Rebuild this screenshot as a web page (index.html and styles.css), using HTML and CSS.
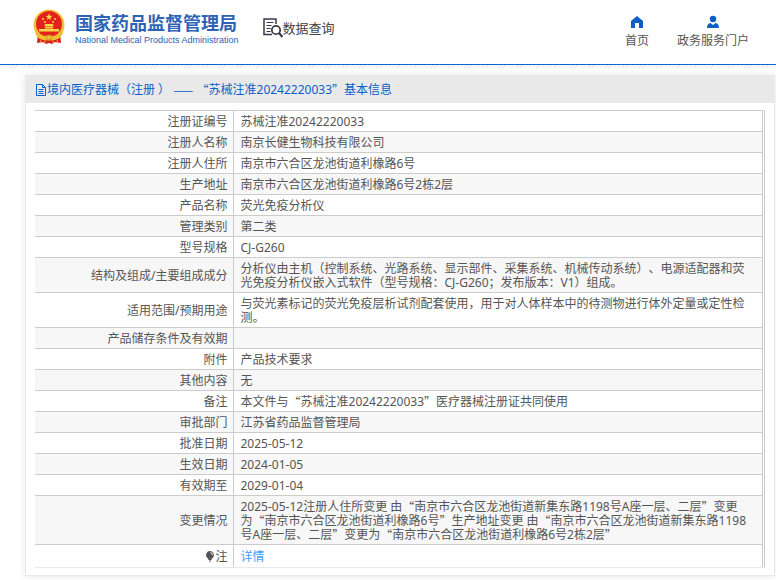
FILE: index.html
```html
<!DOCTYPE html>
<html lang="zh-CN">
<head>
<meta charset="utf-8">
<title>国家药品监督管理局 数据查询</title>
<link rel="stylesheet" href="styles.css">
</head>
<body>
<header class="top">
  <a class="brand" href="#">
    <svg class="emblem" viewBox="0 0 32 36" aria-hidden="true">
      <path d="M5 24L4 34L10 33L13 35L16 34L19 35L22 33L28 34L27 24Z" fill="#d8201a"/>
      <circle cx="16" cy="16" r="15.500" fill="#f3c33c"/>
      <circle cx="16" cy="15" r="13" fill="#e3231b"/>
      <path d="M16 4.500l.9 2.300 2.500.1-2 1.500.7 2.400-2.100-1.400-2.100 1.400.7-2.400-2-1.500 2.500-.1z" fill="#f9d849"/>
      <g fill="#f9d849"><circle cx="10" cy="10" r="1"/><circle cx="12" cy="13" r="1"/><circle cx="20" cy="13" r="1"/><circle cx="22" cy="10" r="1"/>
      <path d="M11 17l1.500-2h7l1.500 2zM12 17.500h8v2h-8zM6 20h20v2.500H6z"/></g>
      <path d="M2 21Q7 27 12 27Q16 25 20 27Q25 27 30 21Q30 29 22 31L16 29L10 31Q2 29 2 21Z" fill="#f0bd33"/>
      <circle cx="16" cy="28.500" r="2.500" fill="#f3c33c" stroke="#c98a1b"/>
      <path d="M8 31l-1 3M12 31v3M20 31v3M24 31l1 3" stroke="#f3a33c"/>
    </svg>
    <span class="names"><span class="name">国家药品监督管理局</span><span class="name-en">National Medical Products Administration</span></span>
  </a>
  <a class="query" href="#">
    <svg class="query-icon" viewBox="0 0 20 20" fill="none" stroke="#37374a" aria-hidden="true">
      <path d="M9 16.500H1V1H13V6" stroke-width="1.500"/>
      <path d="M3.500 4.500h7M3.500 7.500h5M3.500 10.500h4M3.500 13.500h4"/>
      <circle cx="13" cy="12" r="4.200" stroke-width="1.700"/>
      <path d="M16 15l3.500 4" stroke-width="2.200"/>
    </svg>
    <span>数据查询</span>
  </a>
  <nav class="nav">
    <a href="#"><svg viewBox="0 0 14 14" aria-hidden="true"><path d="M7 1L13 6V13H9V8H5V13H1V6Z"/></svg>首页</a>
    <a href="#"><svg viewBox="0 0 14 14" aria-hidden="true"><circle cx="7" cy="4" r="3.200"/><path d="M1 13Q1 8.500 4.500 8L7 10L9.500 8Q13 8.500 13 13Z"/></svg>政务服务门户</a>
  </nav>
</header>
<main class="card">
  <h1 class="title"><svg viewBox="0 0 11 12" fill="none" stroke="#0b5fc7" aria-hidden="true"><path d="M.5 .5H6.500L9.500 3.500V11.500H.5ZM6.500 .5V3.500H9.500M2.500 5.500H7.500M2.500 7.500H7.500M2.500 9.500H7.500"/></svg>境内医疗器械（注册 ） <span class="cjk">——</span> <span class="cjk">“</span>苏械注准20242220033<span class="cjk">”</span>基本信息</h1>
  <div class="frame">
  <table class="info">
    <tr><th scope="row">注册证编号</th><td>苏械注准20242220033</td></tr>
    <tr><th scope="row">注册人名称</th><td>南京长健生物科技有限公司</td></tr>
    <tr><th scope="row">注册人住所</th><td>南京市六合区龙池街道利橡路6号</td></tr>
    <tr><th scope="row">生产地址</th><td>南京市六合区龙池街道利橡路6号2栋2层</td></tr>
    <tr><th scope="row">产品名称</th><td>荧光免疫分析仪</td></tr>
    <tr><th scope="row">管理类别</th><td>第二类</td></tr>
    <tr><th scope="row">型号规格</th><td>CJ-G260</td></tr>
    <tr><th scope="row">结构及组成/主要组成成分</th><td>分析仪由主机（控制系统、光路系统、显示部件、采集系统、机械传动系统）、电源适配器和荧光免疫分析仪嵌入式软件（型号规格：CJ-G260；发布版本：V1）组成。</td></tr>
    <tr><th scope="row">适用范围/预期用途</th><td>与荧光素标记的荧光免疫层析试剂配套使用，用于对人体样本中的待测物进行体外定量或定性检测。</td></tr>
    <tr><th scope="row">产品储存条件及有效期</th><td></td></tr>
    <tr><th scope="row">附件</th><td>产品技术要求</td></tr>
    <tr><th scope="row">其他内容</th><td>无</td></tr>
    <tr><th scope="row">备注</th><td>本文件与<span class="cjk">“</span>苏械注准20242220033<span class="cjk">”</span>医疗器械注册证共同使用</td></tr>
    <tr><th scope="row">审批部门</th><td>江苏省药品监督管理局</td></tr>
    <tr><th scope="row">批准日期</th><td>2025-05-12</td></tr>
    <tr><th scope="row">生效日期</th><td>2024-01-05</td></tr>
    <tr><th scope="row">有效期至</th><td>2029-01-04</td></tr>
    <tr><th scope="row">变更情况</th><td>2025-05-12注册人住所变更 由<span class="cjk">“</span>南京市六合区龙池街道新集东路1198号A座一层、二层<span class="cjk">”</span>变更为<span class="cjk">“</span>南京市六合区龙池街道利橡路6号<span class="cjk">”</span>生产地址变更 由<span class="cjk">“</span>南京市六合区龙池街道新集东路1198号A座一层、二层<span class="cjk">”</span>变更为<span class="cjk">“</span>南京市六合区龙池街道利橡路6号2栋2层<span class="cjk">”</span></td></tr>
    <tr class="note"><th scope="row"><svg viewBox="0 0 10 12" aria-hidden="true"><path d="M5 1a4 4 0 0 1 2 7.400L6.500 10h-3L3 8.400A4 4 0 0 1 5 1zM4 10.500h2v1H4z" fill="#555"/><path d="M5.500 2.500Q7.500 3 7.500 5" fill="none" stroke="#fff"/></svg>注</th><td><a href="#">详情</a></td></tr>
  </table>
  </div>
</main>
</body>
</html>
```
FILE: styles.css
```css
* { box-sizing: border-box; }
html {
  background: repeating-linear-gradient(135deg, #e9e9e9 0 1px, #fff 1px 3px) 0 65px / 100% 3px no-repeat #fff;
}
body {
  display: flow-root;
  margin: 0;
  color: #555;
  font: 12px/14px "Noto Sans", "Noto Sans CJK SC", sans-serif;
  text-spacing-trim: space-all;
}
a { color: inherit; text-decoration: none; }
/* Full-width quotes and dashes */
.cjk {
  display: inline-block;
  height: 14px;
  line-height: 14px;
  vertical-align: top;
  font-family: "Noto Sans CJK SC", sans-serif;
}
.top {
  display: flex;
  align-items: flex-start;
  height: 65px;
  padding: 0 27px 0 33px;
  border-bottom: 1px solid #0b66cc;
  background: #fff;
}
.brand { display: flex; gap: 10px; padding-top: 9px; color: #2e62b4; }
.emblem { width: 32px; height: 36px; }
.names { display: flex; flex-direction: column; padding-top: 2px; }
.name { font-size: 18px; line-height: 24px; font-weight: 700; white-space: nowrap; }
.name-en { font: 9px/11px "Liberation Sans", sans-serif; white-space: nowrap; }
.query { display: flex; padding-top: 18px; margin-left: 24px; color: #444; font-size: 13px; line-height: 20px; }
.query-icon { width: 20px; height: 20px; }
.nav { display: flex; gap: 28px; margin-left: auto; padding-top: 15px; }
.nav a { display: flex; flex-direction: column; align-items: center; gap: 4px; line-height: 16px; }
.nav svg { width: 14px; height: 14px; fill: #0b5fc7; }
.card {
  margin: 10px 1px 4px 25px;
  padding-bottom: 7px;
  border: 1px solid #e9e9e9;
  border-top: 0;
  box-shadow: 0 0 8px rgba(0, 0, 0, 0.1);
}
.title {
  margin: 0;
  padding: 8px 10px 6px;
  background: #e9e9e9;
  color: #0b5fc7;
  font-size: 12px;
  line-height: 14px;
  font-weight: 400;
}
.title svg { width: 11px; height: 12px; vertical-align: -2px; }
.frame {
  margin: 7px 9px 0;
  padding-right: 1px;
  border-right: 1px solid #ccc;
}
.info { width: 100%; border-collapse: collapse; border-right: 1px solid #ccc; }
.info th, .info td { padding: 4px 5px 2px 7px; height: 21px; border-top: 1px solid #ccc; vertical-align: middle; }
.info th { width: 198px; border-right: 1px solid #ccc; font-weight: 400; text-align: right; }
.info td { padding-right: 14px; }
.info tr:nth-child(even) { background: #f7f7f7; }
.info .note th, .info .note td { height: 23px; border-bottom: 1px solid #e9e9e9; }
.info .note svg { width: 10px; height: 12px; vertical-align: -1px; }
.info .note a { color: #409eff; }
```
